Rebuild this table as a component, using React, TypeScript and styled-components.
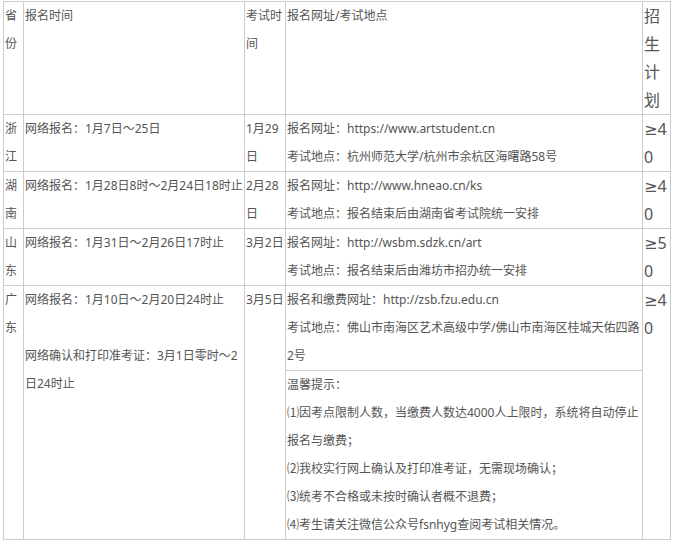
import styled, { createGlobalStyle } from "styled-components";

const GlobalStyle = createGlobalStyle`
  html, body {
    margin: 0;
    padding: 0;
    background: #ffffff;
  }
`;

const Page = styled.div`
  padding: 1px 0 0 3px;
  font-family: "Noto Sans", "Noto Sans CJK SC", sans-serif;
  font-size: 12px;
  color: #555555;
`;

const Table = styled.table`
  width: 668px;
  table-layout: fixed;
  border-collapse: collapse;
`;

const Cell = styled.td<{ $big?: boolean }>`
  border: 1px solid #cccccc;
  padding: 0 0 0 1px;
  vertical-align: top;
  line-height: 28px;
  font-size: ${(p) => (p.$big ? "16px" : "12px")};
  word-break: ${(p) => (p.$big ? "break-all" : "normal")};
  font-family: ${(p) =>
    p.$big
      ? `"Noto Sans", "DejaVu Sans", "Noto Sans CJK SC", sans-serif`
      : "inherit"};
`;

const Line = styled.div`
  min-height: 28px;
`;

type Row = {
  province: string;
  signup: string[];
  exam: string;
  site: string[];
  plan: string;
};

const rows: Row[] = [
  {
    province: "浙江",
    signup: ["网络报名：1月7日～25日"],
    exam: "1月29日",
    site: [
      "报名网址：https://www.artstudent.cn",
      "考试地点：杭州师范大学/杭州市余杭区海曙路58号",
    ],
    plan: "≥40",
  },
  {
    province: "湖南",
    signup: ["网络报名：1月28日8时～2月24日18时止"],
    exam: "2月28日",
    site: [
      "报名网址：http://www.hneao.cn/ks",
      "考试地点：报名结束后由湖南省考试院统一安排",
    ],
    plan: "≥40",
  },
  {
    province: "山东",
    signup: ["网络报名：1月31日～2月26日17时止"],
    exam: "3月2日",
    site: [
      "报名网址：http://wsbm.sdzk.cn/art",
      "考试地点：报名结束后由潍坊市招办统一安排",
    ],
    plan: "≥50",
  },
];

const tips = [
  "温馨提示：",
  "⑴因考点限制人数，当缴费人数达4000人上限时，系统将自动停止报名与缴费；",
  "⑵我校实行网上确认及打印准考证，无需现场确认；",
  "⑶统考不合格或未按时确认者概不退费；",
  "⑷考生请关注微信公众号fsnhyg查阅考试相关情况。",
];

export default function App() {
  return (
    <Page>
      <GlobalStyle />
      <Table>
        <colgroup>
          <col style={{ width: 20 }} />
          <col style={{ width: 221 }} />
          <col style={{ width: 41 }} />
          <col style={{ width: 357 }} />
          <col style={{ width: 28 }} />
        </colgroup>
        <tbody>
          <tr>
            <Cell>省份</Cell>
            <Cell>报名时间</Cell>
            <Cell>考试时间</Cell>
            <Cell>报名网址/考试地点</Cell>
            <Cell $big>招生计划</Cell>
          </tr>
          {rows.map((r) => (
            <tr key={r.province}>
              <Cell>{r.province}</Cell>
              <Cell>
                {r.signup.map((s) => (
                  <Line key={s}>{s}</Line>
                ))}
              </Cell>
              <Cell>{r.exam}</Cell>
              <Cell>
                {r.site.map((s) => (
                  <Line key={s}>{s}</Line>
                ))}
              </Cell>
              <Cell $big>{r.plan}</Cell>
            </tr>
          ))}
          <tr>
            <Cell rowSpan={2}>广东</Cell>
            <Cell rowSpan={2}>
              <Line>网络报名：1月10日～2月20日24时止</Line>
              <Line />
              <Line>网络确认和打印准考证：3月1日零时～2日24时止</Line>
            </Cell>
            <Cell rowSpan={2}>3月5日</Cell>
            <Cell>
              <Line>报名和缴费网址：http://zsb.fzu.edu.cn</Line>
              <Line>考试地点：佛山市南海区艺术高级中学/佛山市南海区桂城天佑四路2号</Line>
            </Cell>
            <Cell $big rowSpan={2}>
              ≥40
            </Cell>
          </tr>
          <tr>
            <Cell>
              {tips.map((t) => (
                <Line key={t}>{t}</Line>
              ))}
            </Cell>
          </tr>
        </tbody>
      </Table>
    </Page>
  );
}
